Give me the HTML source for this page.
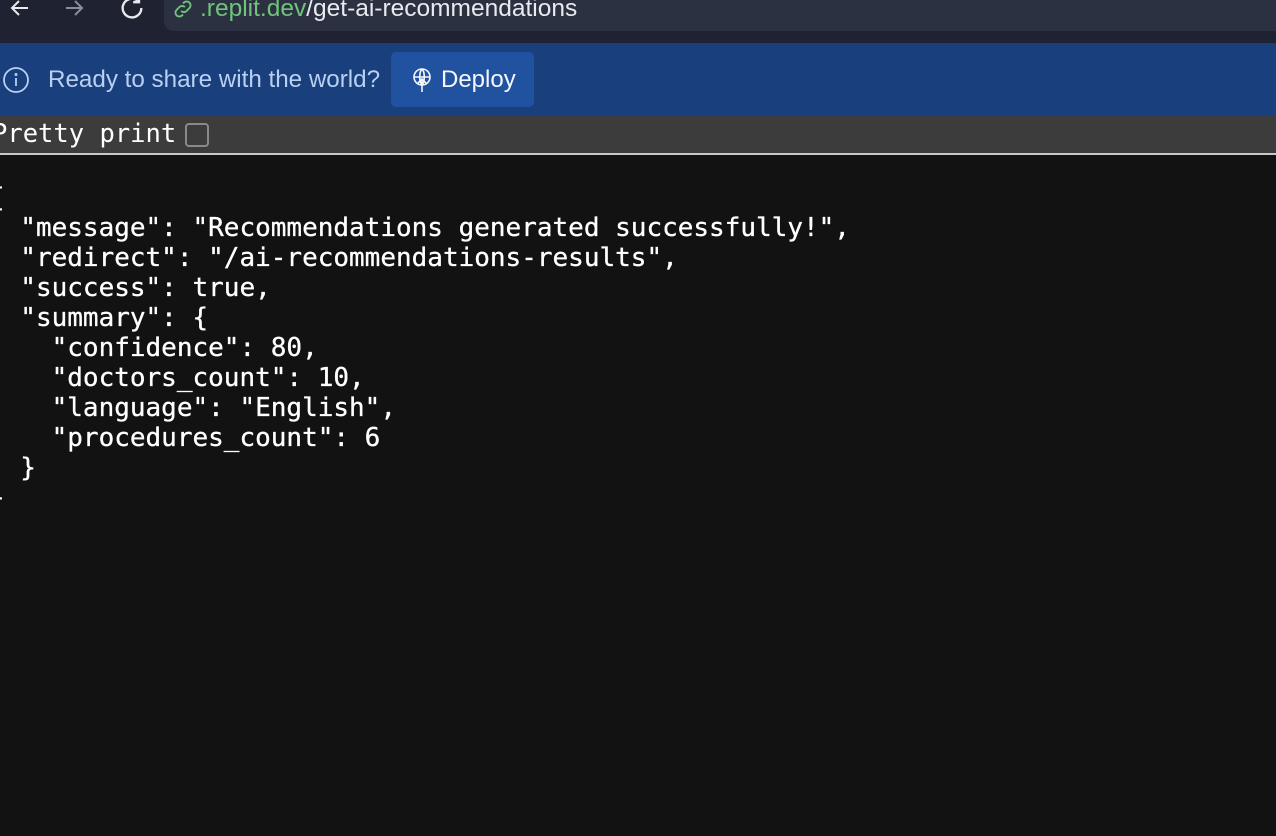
<!DOCTYPE html>
<html><head><meta charset="utf-8"><style>
*{margin:0;padding:0;box-sizing:border-box}
body{width:1276px;height:836px;overflow:hidden;background:#121212;position:relative;font-family:"Liberation Sans",sans-serif}
.top{position:absolute;left:0;top:0;width:1276px;height:43px;background:#1e2231}
.addr{position:absolute;left:164px;top:-10px;width:1130px;height:41px;background:#2c3142;border-radius:10px}
.url{position:absolute;left:200px;top:-5px;font-size:24.5px;color:#e8eaf0;white-space:nowrap}
.url span{color:#6fc37a}
.banner{position:absolute;left:0;top:43px;width:1276px;height:72px;background:#1a3f7d}
.btxt{position:absolute;left:48px;top:23px;font-size:24.2px;color:#b9d0f2}
.dep{position:absolute;left:391px;top:9px;width:143px;height:55px;background:#2152a0;border-radius:5px}
.dep span{position:absolute;left:50px;top:14px;font-size:24px;color:#f4f7fc}
.pp{position:absolute;left:0;top:115px;width:1276px;height:40px;background:#3c3c3c;border-bottom:2px solid #c8c8c8}
.pp .t{position:absolute;left:-8px;top:4px;font-family:"DejaVu Sans Mono","Liberation Mono",monospace;font-size:25.5px;color:#fff}
.cb{position:absolute;left:185px;top:8px;width:24px;height:24px;border:2px solid #8a8a8a;border-radius:4px;background:#3c3c3c}
pre{position:absolute;left:-11px;top:183px;font-family:"DejaVu Sans Mono","Liberation Mono",monospace;font-size:26px;line-height:30px;color:#fff;-webkit-text-stroke:0.3px #fff}
</style></head><body>
<div class="top">
<svg style="position:absolute;left:8px;top:-4px" width="24" height="24" viewBox="0 0 24 24" fill="none" stroke="#e8eaf0" stroke-width="2"><path d="M20 12H5M11 5l-7 7 7 7"/></svg>
<svg style="position:absolute;left:62px;top:-4px" width="24" height="24" viewBox="0 0 24 24" fill="none" stroke="#8a8e99" stroke-width="2"><path d="M4 12h15M13 5l7 7-7 7"/></svg>
<svg style="position:absolute;left:118px;top:-6px" width="28" height="28" viewBox="0 0 24 24" fill="none" stroke="#e8eaf0" stroke-width="2"><path d="M20 12a8 8 0 1 1-3-6.2M18 2v5h-5"/></svg>
<div class="addr"></div>
<svg style="position:absolute;left:172px;top:-2px" width="22" height="22" viewBox="0 0 24 24" fill="none" stroke="#6fc37a" stroke-width="2"><path d="M10 14a4 4 0 0 0 6 0l3-3a4 4 0 0 0-6-6l-1 1M14 10a4 4 0 0 0-6 0l-3 3a4 4 0 0 0 6 6l1-1"/></svg>
<div class="url"><span>.replit.dev</span>/get-ai-recommendations</div>
</div>
<div class="banner">
<svg style="position:absolute;left:2px;top:23px" width="28" height="28" viewBox="0 0 28 28" fill="none" stroke="#b9d0f2" stroke-width="1.8"><circle cx="14" cy="14" r="12"/><path d="M14 12v8"/><circle cx="14" cy="8.5" r="0.6" fill="#b9d0f2"/></svg>
<div class="btxt">Ready to share with the world?</div>
<div class="dep">
<svg style="position:absolute;left:20px;top:15px" width="22" height="26" viewBox="0 0 22 26" fill="none" stroke="#f4f7fc" stroke-width="1.6"><circle cx="11" cy="10" r="8"/><path d="M3 10h16M11 2c-3 3-3 13 0 16c3-3 3-13 0-16M11 25V12M7 16l4-4 4 4"/></svg>
<span>Deploy</span></div>
</div>
<div class="pp"><div class="t">Pretty print</div><div class="cb"></div></div>
<pre>{
  "message": "Recommendations generated successfully!",
  "redirect": "/ai-recommendations-results",
  "success": true,
  "summary": {
    "confidence": 80,
    "doctors_count": 10,
    "language": "English",
    "procedures_count": 6
  }
}</pre>
</body></html>
